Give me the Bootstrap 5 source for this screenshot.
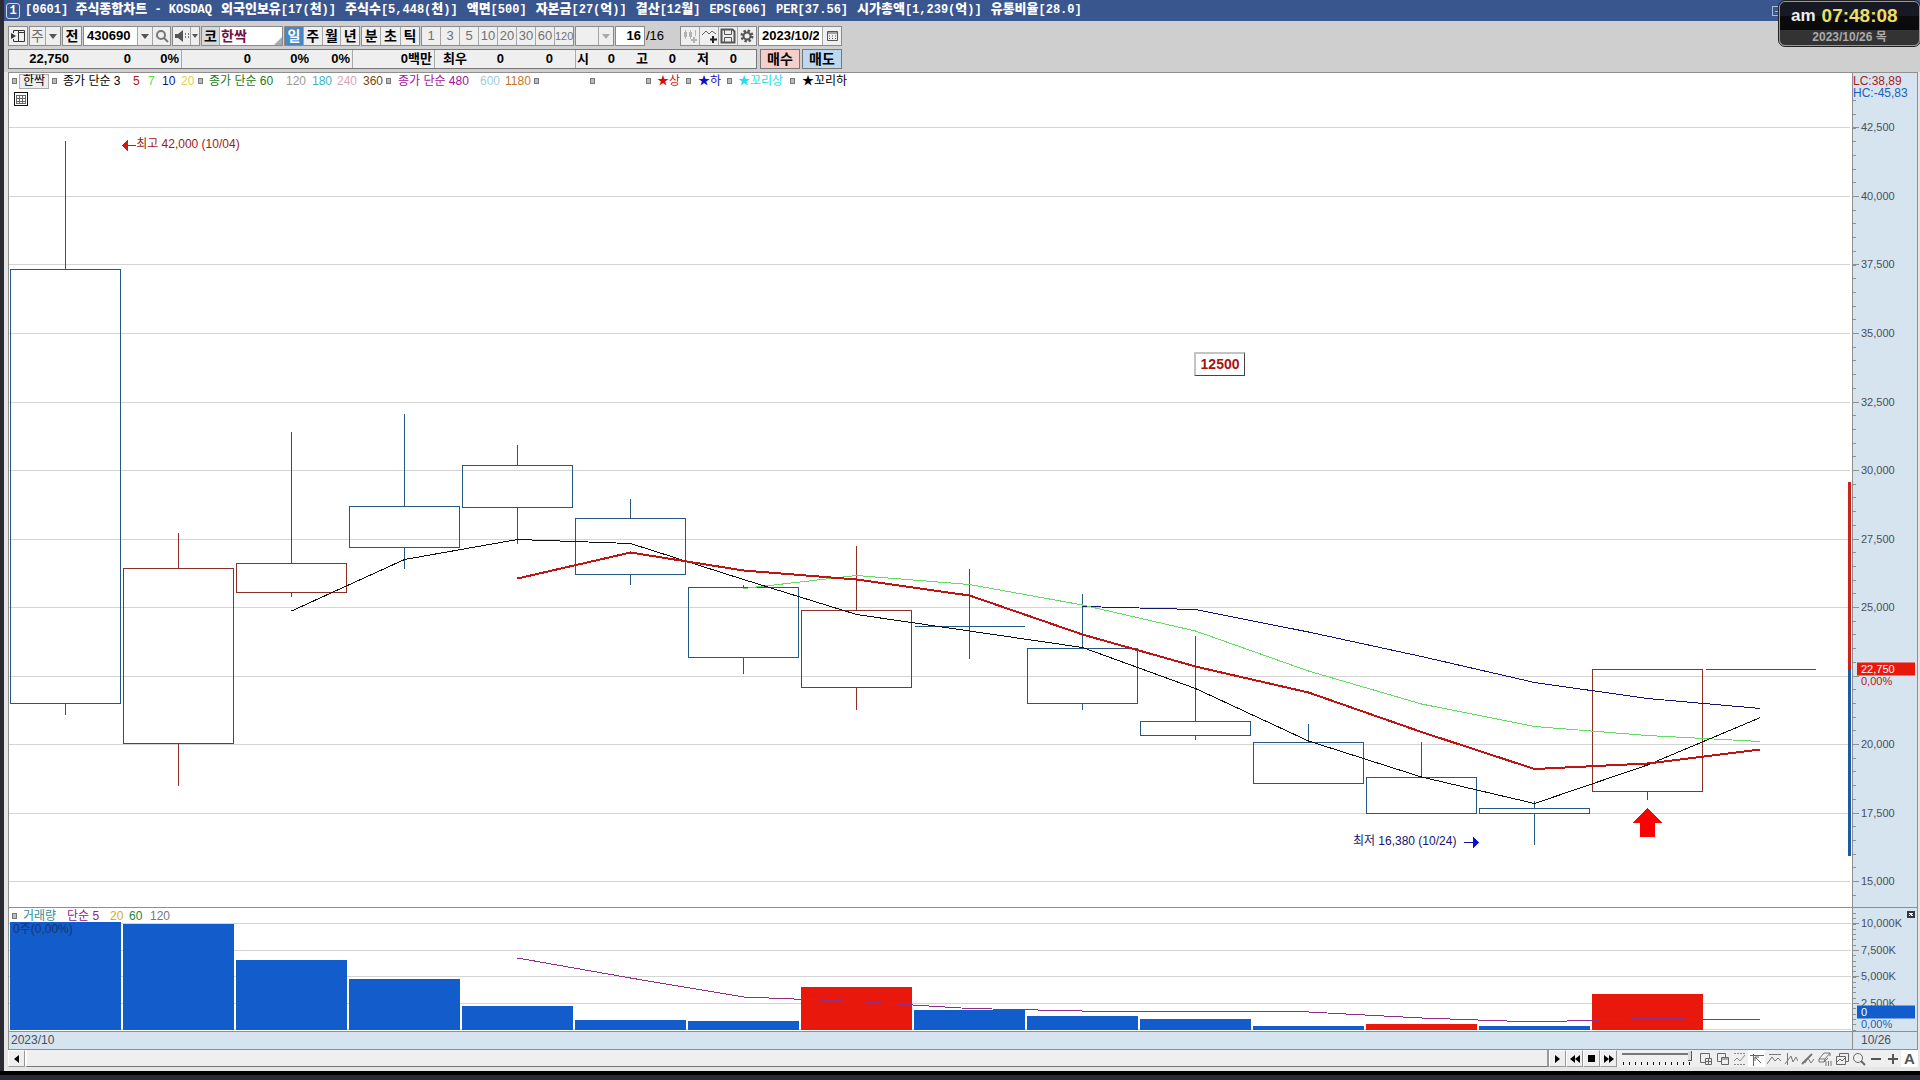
<!DOCTYPE html>
<html lang="ko">
<head>
<meta charset="utf-8">
<meta name="viewport" content="width=device-width, initial-scale=1">
<title>[0601] 주식종합차트</title>
<link rel="stylesheet" href="https://cdn.jsdelivr.net/npm/bootstrap@5.3.0/dist/css/bootstrap.min.css">
<style>
:root { --line:#8f8f8f; --axis:#d6e4ef; --face:#efefef; }
body { background:#2b2b33; color:#000; font-family:"Liberation Sans","Noto Sans CJK KR",sans-serif; font-size:12px; line-height:16px; height:100vh; overflow:hidden; }
button, input, select { font:inherit; color:inherit; border-radius:0; }
button { padding:0; }
.window-frame { margin-left:4px; background:#e6e6e6; min-height:0; }
.title-strip { height:21px; background:#3a568f; color:#fff; padding-left:2px; gap:5px; font-family:"Liberation Mono","Noto Sans CJK KR",monospace; font-size:12px; line-height:16px; font-weight:700; white-space:pre; }
.title-fields { gap:9px; height:18px; }
.title-fields b { font-size:13px; line-height:16px; }
.win-no { width:14px; height:16px; border:1px solid #cdd8ee; border-radius:3px; line-height:14px; text-align:center; }
.tools { background:#cfcfcf; height:51px; padding:5px 0 0 4px; gap:3px; }
.tool-row { height:20px; gap:1px; font-weight:700; font-size:13px; }
.grp { border:1px solid #8a8a8a; height:20px; background:var(--face); display:flex; align-items:stretch; }
.grp > button { border:0; background:transparent; flex:1 1 0; min-width:0; line-height:18px; text-align:center; white-space:nowrap; }
.grp > * + * { border-left:1px solid #a5a5a5 !important; }
.grp > .active { background:#4a86c4; color:#fff; }
.grp svg { display:block; margin:auto; }
.ko-keys { font-size:14px; }
.dim { color:#707070; font-weight:400; }
.grp input { border:0; background:#fff; min-width:0; padding:0 3px; outline:0; }
.pick { width:15px; flex:none !important; }
.quote { border:1px solid #777; background:var(--face); height:20px; display:grid; grid-template-columns:172px 171px 82px 141px 1fr; width:749px; line-height:18px; }
.quote > div { display:grid; text-align:right; border-left:1px solid #aaa; padding-right:2px; }
.quote > div:first-child { border:0; }
.order { width:40px; height:20px; border:1px solid #777; line-height:18px; font-weight:700; font-size:14px; }
.buy { background:#f6cfcb; } .sell { background:#bcd9f0; }
.chart-body { border:1px solid var(--line); border-width:1px 1px 0 1px; margin:0 2px 0 4px; min-height:0; }
.chart-body > div > div > svg { shape-rendering:crispEdges; }
.price-pane { min-height:0; background:#fff; }
.volume-pane { height:124px; background:#fff; border-top:1px solid var(--line); }
.scale { width:65px; background:var(--axis); border-left:1px solid var(--line); color:#4a4f5c; }
.tick-label { position:absolute; left:8px; transform:translateY(-50%); font-size:11px; line-height:12px; }
.now-box { position:absolute; left:4px; right:2px; height:13px; font-size:11px; line-height:13px; padding-left:4px; color:#fff; transform:translateY(-50%); }
.extent { line-height:12px; padding-top:2px; }
.legend-row { display:grid; align-items:center; height:16px; line-height:14px; position:relative; white-space:nowrap; }
.legend-top { grid-template-columns:7px 33px 11px 70px 15px 14px 19px 17px 11px 77px 26px 25px 26px 23px 12px 82px 25px 29px 56px 56px 11px 29px 12px 29px 11px 52px 12px 60px; padding-left:3px; }
.legend-vol { grid-template-columns:11px 44px 43px 19px 21px 30px; padding-left:3px; height:15px; }
.day-volume { padding-left:4px; line-height:12px; color:#14386f; }
.dot { width:5px; height:6px; border:1px solid #777; background:#bbb; display:block; }
.name-tag { border:1px solid #aaa; background:#eee; height:15px; width:30px; line-height:12px; padding:0; }
.note { position:absolute; transform:translateY(-50%); white-space:nowrap; line-height:16px; }
.memo { border:1px solid #444; border-top:2px solid #c4c4c4; border-left:2px solid #c4c4c4; background:#fff; color:#a81212; font-weight:700; width:51px; height:24px; line-height:21px; text-align:center; font-size:14px; }
.date-strip { height:19px; border-top:1px solid var(--line); border-bottom:1px solid var(--line); background:var(--axis); color:#4a4f5c; line-height:16px; }
.date-strip span { padding-left:2px; }
.date-strip .date-end { width:65px; border-left:1px solid var(--line); padding-left:8px; }
.foot { height:21px; margin:0 2px 0 4px; border-bottom:4px solid #e6e6e6; background:var(--face); }
.foot button { border:1px solid #999; border-top-color:#fff; border-left-color:#fff; background:var(--face); width:17px; height:17px; }
.foot .flat { border:0; width:17px; }
.foot .flat.pressed { background:#fff; }
.foot .auto-key { font-weight:700; font-size:15px; line-height:17px; color:#555; }
.foot svg { display:block; margin:auto; }
.track { border-right:2px solid #999; border-bottom:1px solid #777; border-left:2px solid #fff; }
.speed { width:80px; padding:0 5px; background:repeating-linear-gradient(90deg,#111 0 1px,transparent 1px 6px) 6px 12px/70px 3px no-repeat; }
.speed input { appearance:none; display:block; width:70px; height:11px; background:linear-gradient(#777,#777) 0 3px/100% 2px no-repeat; margin:0; }
.speed input::-webkit-slider-thumb { appearance:none; width:4px; height:10px; background:#ddd; border-right:1px solid #555; border-bottom:1px solid #555; }
.desk { height:9px; border-top:4px solid #000; background:#2b2b33; }
.clock { position:absolute; top:1px; right:0; width:141px; height:45px; border:1px solid #999; outline:1px solid #222; border-radius:6px; background:linear-gradient(#171a24 0 14px,#0b0b0d 14px 28px,#333 28px); color:#eee; font-weight:700; z-index:5; }
.clock-top { height:28px; padding-left:11px; gap:6px; }
.clock .hhmm { color:#ecdf62; font-size:19px; line-height:20px; }
.clock .ampm { font-size:17px; line-height:20px; }
.clock .day { color:#aaa; font-size:12px; line-height:14px; }
</style>
<script src="https://cdn.jsdelivr.net/npm/bootstrap@5.3.0/dist/js/bootstrap.bundle.min.js"></script>
</head>
<body class="d-flex flex-column position-relative">
<main class="window-frame d-flex flex-column flex-grow-1">
  <header class="title-strip d-flex align-items-center"><span class="win-no">1</span>
    <div class="title-fields d-flex align-items-start"><span>[0601] <b>주식종합차트</b> - KOSDAQ</span><span><b>외국인보유</b>[17(<b>천</b>)]</span><span><b>주식수</b>[5,448(<b>천</b>)]</span><span><b>액면</b>[500]</span><span><b>자본금</b>[27(<b>억</b>)]</span><span><b>결산</b>[12<b>월</b>]</span><span>EPS[606]</span><span>PER[37.56]</span><span><b>시가총액</b>[1,239(<b>억</b>)]</span><span><b>유통비율</b>[28.0]</span></div>
    <svg class="ms-auto" width="149" height="16" fill="none" stroke="#a9b9d8"><path d="M1 3.500H9M1.500 3V12M1 12.500H8M4 8.500H9"/></svg></header>

  <section class="tools d-flex flex-column">
    <div class="tool-row d-flex">
      <div class="grp" style="width:20px"><button aria-label="패널"><svg width="16" height="16" fill="none" stroke="#333"><path d="M3.500 5V2.500H14.500V13.500H3.500V11M8.500 2V13M8 4.500H15"/><path d="M1 5L6 8L1 11Z" fill="#333" stroke="none"/></svg></button></div>
      <div class="grp ko-keys" style="width:32px"><button class="dim">주</button><button class="pick" aria-label="주기"><svg width="8" height="5"><path d="M0 0H8L4 5Z" fill="#555"/></svg></button></div>
      <div class="grp ko-keys" style="width:20px"><button>전</button></div>
      <div class="grp" style="width:88px"><input aria-label="종목코드" value="430690" style="width:53px"><button class="pick" aria-label="최근 종목"><svg width="8" height="5"><path d="M0 0H8L4 5Z" fill="#555"/></svg></button><button aria-label="검색"><svg width="14" height="14" fill="none" stroke="#777" stroke-width="2"><circle cx="6" cy="6" r="4"/><path d="M9 9L13 13"/></svg></button></div>
      <div class="grp" style="width:28px"><button aria-label="소리"><svg width="16" height="14"><path d="M1 5H4L9 1V13L4 9H1Z" fill="#555"/><path d="M11 5h1M11 8h1M14 5h1M14 8h1" stroke="#777" stroke-width="2"/></svg></button><button aria-label="소리 선택" style="flex:none;width:9px"><svg width="6" height="4"><path d="M0 0H6L3 4Z" fill="#555"/></svg></button></div>
      <div class="grp ko-keys position-relative" style="width:82px"><label for="stockName" style="background:#d9d9d9;line-height:18px;width:17px;text-align:center">코</label><input id="stockName" value="한싹" style="width:63px;color:#741144;padding:0 1px"><svg class="position-absolute bottom-0 end-0" width="8" height="8" style="border:0!important"><path d="M8 0V8H0Z" fill="#aaa"/></svg></div>
      <div class="grp ko-keys" style="width:76px"><button class="active">일</button><button>주</button><button>월</button><button>년</button></div>
      <div class="grp ko-keys" style="width:59px"><button>분</button><button>초</button><button>틱</button></div>
      <div class="grp dim" style="width:153px"><button>1</button><button>3</button><button>5</button><button>10</button><button>20</button><button>30</button><button>60</button><button style="font-size:11px">120</button></div>
      <div class="grp" style="width:39px"><button aria-label="분 입력" disabled></button><button class="pick" aria-label="분 선택"><svg width="8" height="5"><path d="M0 0H8L4 5Z" fill="#aaa"/></svg></button></div>
      <div class="grp" style="width:30px"><input aria-label="표시 개수" value="16" class="w-100 text-end"></div>
      <span class="fw-normal" style="width:33px;line-height:20px">/16</span>
      <div class="grp" style="width:77px">
        <button aria-label="봉 추가"><svg width="16" height="16" fill="none" stroke="#b4b4b4"><path d="M3.500 2V11M8.500 2V11M13.500 2V8"/><path d="M3.500 4V9M8.500 4V9" stroke-width="3"/><path d="M12 9V15M9 12H15" stroke-width="2"/></svg></button>
        <button aria-label="지표 추가"><svg width="17" height="16" fill="none" stroke="#666"><path d="M1 7L5 3L8 6L11 3L15 6"/><path d="M12 8V15M9 11.500H16" stroke="#222" stroke-width="2"/></svg></button>
        <button aria-label="저장"><svg width="16" height="16" fill="none" stroke="#555"><path d="M1.500 1.500H12.500L14.500 3.500V14.500H1.500Z" stroke-width="2"/><path d="M4.500 2V6.500H11.500V2M4.500 14V9.500H11.500V14"/></svg></button>
        <button aria-label="설정"><svg width="14" height="14" fill="none" stroke="#555"><circle cx="7" cy="7" r="5" stroke-width="3" stroke-dasharray="2.200 1.727"/><circle cx="7" cy="7" r="3.500" stroke-width="2"/></svg></button></div>
      <div class="grp" style="width:84px"><input aria-label="날짜" value="2023/10/26" style="width:63px"><button aria-label="달력"><svg width="13" height="12" fill="none" stroke="#555"><path d="M1.500 1.500H11.500V10.500H1.500ZM1 3H12"/><path d="M3 6h1M6 6h1M9 6h1M3 8.500h1M6 8.500h1M9 8.500h1"/></svg></button></div>
    </div>
    <div class="tool-row d-flex" style="gap:3px">
      <div class="quote">
        <div style="grid-template-columns:60px 62px 1fr"><span>22,750</span><span>0</span><span>0%</span></div>
        <div style="grid-template-columns:69px 58px 1fr"><span>0</span><span>0%</span><span>0%</span></div>
        <div><span>0백만</span></div>
        <div style="grid-template-columns:32px 37px 49px"><span>최우</span><span>0</span><span>0</span></div>
        <div style="grid-template-columns:13px 26px 33px 28px 33px 28px"><span>시</span><span>0</span><span>고</span><span>0</span><span>저</span><span>0</span></div>
      </div>
      <div class="d-flex" style="gap:2px"><button class="order buy">매수</button><button class="order sell">매도</button></div>
    </div>
  </section>

  <section class="chart-body d-flex flex-column flex-grow-1">
    <div class="price-pane d-flex flex-grow-1">
      <div class="position-relative flex-grow-1">
        <svg id="price" class="position-absolute top-0 start-0 w-100 h-100" viewBox="9 73 1843 834" preserveAspectRatio="none"></svg>
        <div class="legend-row legend-top">
          <i class="dot"></i><button class="name-tag">한싹</button><i class="dot"></i><span>종가 단순 3</span><span style="color:#b01818">5</span><span style="color:#4fe04f">7</span><span style="color:#10108c">10</span><span style="color:#e2cf4a">20</span>
          <i class="dot"></i><span style="color:#187818">종가 단순 60</span><span style="color:#999">120</span><span style="color:#35b5d0">180</span><span style="color:#d9a3b8">240</span><span style="color:#7a4212">360</span>
          <i class="dot"></i><span style="color:#a010a0">종가 단순 480</span><span style="color:#a3cbe0">600</span><span style="color:#c47428">1180</span><i class="dot"></i><i class="dot"></i><i class="dot"></i>
          <span style="color:#d01010">★상</span><i class="dot"></i><span style="color:#1010c8">★하</span><i class="dot"></i><span style="color:#20e0ea">★꼬리상</span><i class="dot"></i><span>★꼬리하</span>
        </div>
        <svg class="position-relative d-block" style="margin:3px 0 0 5px" width="14" height="14" fill="none" stroke="#666"><rect x=".5" y=".5" width="13" height="13" stroke="#111"/><path d="M2.500 3.500H11.500V11.500H2.500ZM2 6.500H12M2 9H12M5.500 3V12M8.500 3V12"/></svg>
        <div class="note" style="left:6.900%;top:8.500%;color:#a01818">최고 42,000 (10/04)</div>
        <div class="note" style="left:72.920%;top:92.100%;color:#14146e">최저 16,380 (10/24)</div>
        <div class="note memo" style="left:64.300%;top:34.900%">12500</div>
      </div>
      <div class="scale position-relative" id="priceScale">
        <svg class="position-absolute top-0 start-0 w-100 h-100" viewBox="1853 73 64 834" preserveAspectRatio="none"></svg>
        <div class="extent position-relative"><div style="color:#a82020">LC:38,89</div><div style="color:#1c5fb8">HC:-45,83</div></div>
      </div>
    </div>
    <div class="volume-pane d-flex">
      <div class="position-relative flex-grow-1">
        <svg id="volume" class="position-absolute top-0 start-0 w-100 h-100" viewBox="9 908 1843 123" preserveAspectRatio="none"></svg>
        <div class="legend-row legend-vol"><i class="dot"></i><span style="color:#2f8f8f">거래량</span><span style="color:#90208c">단순 5</span><span style="color:#d9a928">20</span><span style="color:#208838">60</span><span style="color:#777">120</span></div>
        <div class="day-volume position-relative">0주(0,00%)</div>
      </div>
      <div class="scale position-relative" id="volumeScale">
        <svg class="position-absolute top-0 start-0 w-100 h-100" viewBox="1853 908 64 123" preserveAspectRatio="none"></svg>
        <svg class="position-absolute" style="top:3px;right:2px" width="8" height="7"><rect width="8" height="7" fill="#333a44"/><path d="M2 2L6 5M6 2L2 5" stroke="#fff"/></svg>
      </div>
    </div>
    <div class="date-strip d-flex"><span class="flex-grow-1">2023/10</span><span class="date-end">10/26</span></div>
  </section>

  <footer class="foot d-flex">
    <button aria-label="왼쪽"><svg width="5" height="8"><path d="M5 0V8L0 4Z"/></svg></button>
    <div class="track flex-grow-1"></div>
    <button aria-label="재생"><svg width="5" height="8"><path d="M0 0V8L5 4Z"/></svg></button>
    <button aria-label="뒤로"><svg width="10" height="8"><path d="M5 0V8L0 4ZM10 0V8L5 4Z"/></svg></button>
    <button aria-label="정지"><svg width="7" height="7"><path d="M0 0H7V7H0Z"/></svg></button>
    <button aria-label="앞으로"><svg width="10" height="8"><path d="M0 0V8L5 4ZM5 0V8L10 4Z"/></svg></button>
    <div class="speed"><input type="range" aria-label="속도" value="100"></div>
    <button class="flat" aria-label="새 창"><svg width="14" height="14" fill="none" stroke="#666"><path d="M6 10.500H1.500V1.500H10.500V6M6.500 6.500H12.500V12.500H6.500ZM9.500 7V12M7 9.500H12"/></svg></button>
    <button class="flat" aria-label="겹침"><svg width="14" height="14" fill="none" stroke="#666"><path d="M5 9.500H1.500V1.500H9.500V5M5.500 5.500H12.500V12.500H5.500ZM5 7H13"/></svg></button>
    <button class="flat" aria-label="영역"><svg width="14" height="14" fill="none" stroke="#888"><path d="M1 1.500H13M1 12.500H13" stroke-dasharray="2 1"/><path d="M1 9L4 6L7 9L12 3"/></svg></button>
    <button class="flat pressed" aria-label="커서"><svg width="14" height="14" fill="none" stroke="#666"><path d="M0 3.500H14M3.500 2V14M5 5L11 11M5 9V5H9"/></svg></button>
    <button class="flat" aria-label="수평선"><svg width="14" height="14" fill="none" stroke="#777"><path d="M2 2.500H14M0 12L5 5L8 9L11 6L14 9"/></svg></button>
    <button class="flat" aria-label="수직선"><svg width="14" height="14" fill="none" stroke="#777"><path d="M3.500 1V13M1 12L7 4L9 10L12 5L14 9"/></svg></button>
    <button class="flat" aria-label="추세선"><svg width="14" height="14" fill="none" stroke="#777"><path d="M1 12L11 2" stroke-width="2"/><path d="M4 11L7 6L10 11L13 7"/></svg></button>
    <button class="flat" aria-label="모두 지우기"><svg width="14" height="14" fill="none" stroke="#777"><path d="M1 7L6 1H12L7 7ZM1 7V10H6L7 7M12 1V4M6 10L10 6"/><path d="M8 9V14M10.500 9V14M13 9V14"/></svg></button>
    <button class="flat" aria-label="차트 전환"><svg width="14" height="14" fill="none" stroke="#666"><path d="M4.500 4V1.500H13.500V9.500H10M1.500 4.500H10.500V12.500H1.500ZM2 10L5 7L7 9L10 6"/></svg></button>
    <button class="flat" aria-label="확대경"><svg width="14" height="14" fill="none" stroke="#666"><circle cx="6" cy="6" r="4.500"/><path d="M9 9L13 13" stroke-width="2"/></svg></button>
    <button class="flat" aria-label="축소"><svg width="12" height="12"><path d="M1 6H11" stroke="#555" stroke-width="2"/></svg></button>
    <button class="flat" aria-label="확대"><svg width="12" height="12"><path d="M1 6H11M6 1V11" stroke="#555" stroke-width="2"/></svg></button>
    <button class="flat pressed auto-key">A</button>
  </footer>
</main>
<div class="desk"></div>
<aside class="clock d-flex flex-column">
  <div class="clock-top d-flex align-items-center"><span class="ampm">am</span><span class="hhmm">07:48:08</span></div>
  <div class="day text-center">2023/10/26 목</div>
</aside>
<script>
const cx = i => 65.5 + 113 * i;
const tag = (n, a) => `<${n} ${Object.entries(a).map(([k, v]) => `${k}="${v}"`).join(' ')}/>`;
const path = (d, c, w = 1, f = 'none') => tag('path', { d, stroke: c, 'stroke-width': w, fill: f, 'vector-effect': 'non-scaling-stroke' });
const UP = '#8c2f26', DN = '#26587f';
// colour, high, body top, body bottom, low
const candles = [
  [DN,141,269.5,703.5,715],[UP,533,568.5,743.5,786],[UP,432,563.5,592.5,597],[DN,414,506.5,547.5,569],
  [DN,445,465.5,507.5,544],[DN,499,518.5,574.5,585],[DN,585,587.5,657.5,674],[UP,546,610.5,687.5,710],
  [DN,569,626.5,626.5,659],[DN,594,648.5,703.5,710],[DN,636,721.5,735.5,740],[DN,724,742.5,783.5,783.5],
  [DN,742,777.5,813.5,813.5],[DN,801,808.5,813.5,845],[UP,669.5,669.5,791.5,800],[UP,669.5,669.5,669.5,669.5]];
const majors = [127.5,196.5,264.5,333.5,402.5,470.5,539.5,607.5,676.5,744.5,813.5,881.5];
let s = '';
majors.forEach(y => s += path(`M9 ${y}H1850`, '#d4d4d4'));
candles.forEach(([c, h, t, b, l], i) => {
  const x = cx(i);
  s += path(`M${x} ${h}V${t}M${x} ${b}V${l}M${x-55} ${t}H${x+55}V${b}H${x-55}Z`, c);
});
const line = (start, ys) => 'M' + ys.map((y, k) => `${cx(start + k)} ${y}`).join('L');
s += path(line(9, [606.5,609.5,632,656.5,682.5,698.5,708.5]), '#14146e');
s += path(line(6, [588.5,575.5,584.5,605,631,671,704,726.5,735.5,741.5]), '#62dc62');
s += path(line(2, [611,559.5,539.5,543.5,579.5,614.5,631,647.5,688.5,741,777,803.5,765,717.5]), '#111');
s += path(line(4, [578.5,552.5,570.5,579.5,595.5,634.5,666.5,692.5,732,769,763.5,749.5]), '#c01414', 2);
s += path('M1849.5 482V669', '#cc2218', 3) + path('M1849.5 669V856', '#1c5aa8', 3);
s += path('M1647.500 808L1662 822.500H1655V837H1640V822.500H1633Z', 'none', 0, '#f00');
s += path('M122 145.500L128 139.500V151.500Z', 'none', 0, '#e01010') + path('M127 145.500H136', '#c01818');
s += path('M1464 842.500H1474', '#1010a0') + path('M1479 842.500L1473 837V848Z', 'none', 0, '#1010d0');
document.getElementById('price').innerHTML = s;

const V = '#125ccc', R = '#e8190c';
let v = '';
[923.5,950.5,976.5,1003.5,1029.5].forEach(y => v += path(`M9 ${y}H1851`, '#d4d4d4'));
[922,924,960,979,1006,1020,1021,987,1010,1016,1019,1026,1024,1026,994].forEach((y, i) =>
  v += tag('rect', { x: cx(i) - 55.5, y, width: 111, height: 1030 - y, fill: [7,12,14].includes(i) ? R : V }));
v += path(line(4, [958,978,997,1001.5,1008.5,1011,1011,1012,1018,1022,1018.5,1020]), '#90308c');
document.getElementById('volume').innerHTML = v;

const at = (y, top, h) => (y - top) / h * 100;
function scale(id, top, h, ys, names, minor, lo, hi) {
  const box = document.getElementById(id);
  let t = '';
  for (let k = lo; k <= hi; k++) t += path(`M1853 ${Math.round(ys[0] + k * minor) + .5}h3`, '#8f8f8f');
  ys.forEach(y => t += path(`M1853 ${y}h6`, '#8f8f8f'));
  box.querySelector('svg').innerHTML = t;
  names.forEach((n, i) => { if (n) box.insertAdjacentHTML('beforeend', `<div class="tick-label" style="top:${at(ys[i] - 1, top, h)}%">${n}</div>`); });
}
scale('priceScale', 73, 834, majors, ['42,500','40,000','37,500','35,000','32,500','30,000','27,500','25,000','','20,000','17,500','15,000'], 13.7, -2, 56);
scale('volumeScale', 908, 123, [923.5,950.5,976.5,1003.5], ['10,000K','7,500K','5,000K','2,500K'], 5.3, -2, 20);
document.getElementById('priceScale').insertAdjacentHTML('beforeend', `<div class="now-box" style="background:${R};top:${at(668.5,73,834)}%">22,750</div><div class="tick-label" style="color:#b02020;top:${at(681,73,834)}%">0,00%</div>`);
document.getElementById('volumeScale').insertAdjacentHTML('beforeend', `<div class="now-box" style="background:${V};top:${at(1011.5,908,123)}%">0</div><div class="tick-label" style="color:#1c5fb8;top:${at(1024,908,123)}%">0,00%</div>`);
</script>
</body>
</html>
